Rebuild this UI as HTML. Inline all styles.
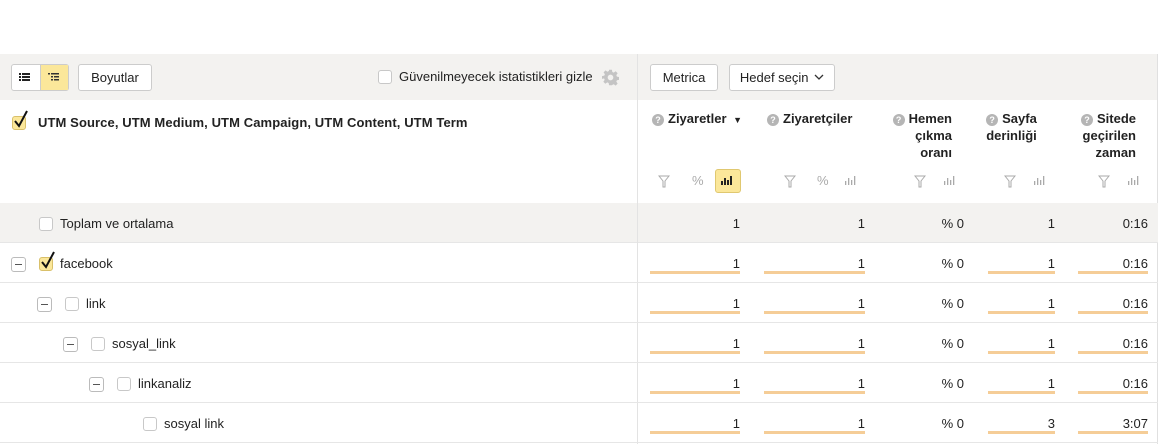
<!DOCTYPE html>
<html><head><meta charset="utf-8"><style>
*{box-sizing:border-box;margin:0;padding:0}
body{width:1161px;height:444px;overflow:hidden;background:#fff;font-family:"Liberation Sans",Arial,sans-serif;font-size:13px;color:#222;position:relative}
.a{position:absolute}
.btn{position:absolute;border:1px solid #ccc;border-radius:3px;background:#fff;height:27px;line-height:25px;text-align:center;font-size:13px}
.cb{position:absolute;width:14px;height:14px;border:1px solid #c8c8c8;border-radius:3px;background:#fff}
.cbc{background:#fbe79a;border-color:#d9c06a}
.tick{position:absolute;left:0px;top:-7px}
.mn{position:absolute;width:15px;height:15px;border:1px solid #bbb;border-radius:3px;background:#fff}
.mn:after{content:"";position:absolute;left:3px;top:6px;width:7px;height:1px;background:#555}
.row{position:absolute;left:0;width:1158px;height:40px;border-bottom:1px solid #e6e6e6}
.num{position:absolute;text-align:right;font-size:13px}
.bar{position:absolute;height:3px;background:#f5cd97}
.h{position:absolute;font-weight:bold;font-size:13px;line-height:17px;text-align:right}
.q{display:inline-block;width:12px;height:12px;border-radius:50%;background:#b5b5b5;color:#fff;font-size:9px;line-height:12px;text-align:center;vertical-align:0px;margin-right:4px;font-weight:bold}
.ic{position:absolute;color:#aaa;font-size:13px}
</style></head><body>
<div class="a" style="left:0;top:54px;width:1158px;height:46px;background:#f3f2f0"></div>
<div class="a" style="left:1157px;top:54px;width:1px;height:390px;background:#e0e0e0"></div>
<div class="a" style="left:637px;top:54px;width:1px;height:390px;background:#e3e3e3"></div>
<!-- toolbar -->
<div class="btn" style="left:11px;top:64px;width:58px"></div>
<div class="a" style="left:40px;top:65px;width:28px;height:25px;background:#fbe79a;border-left:1px solid #ccc"></div>
<svg class="a" style="left:19px;top:72px" width="12" height="10"><g fill="#222"><rect x="0" y="1" width="2" height="2"/><rect x="3" y="1" width="8" height="2"/><rect x="0" y="4" width="2" height="2"/><rect x="3" y="4" width="8" height="2"/><rect x="0" y="7" width="2" height="2"/><rect x="3" y="7" width="8" height="2"/></g></svg>
<svg class="a" style="left:48px;top:72px" width="12" height="10"><g fill="#333"><rect x="0" y="1" width="2" height="1.5"/><rect x="3" y="1" width="8" height="1.5"/><rect x="3" y="4" width="2" height="1.5"/><rect x="6" y="4" width="5" height="1.5"/><rect x="3" y="7" width="2" height="1.5"/><rect x="6" y="7" width="5" height="1.5"/></g></svg>
<div class="btn" style="left:78px;top:64px;width:74px">Boyutlar</div>
<div class="cb" style="left:378px;top:70px"></div>
<div class="a" style="left:399px;top:69px">Güvenilmeyecek istatistikleri gizle</div>
<svg class="a" style="left:602px;top:69px" width="17" height="17" viewBox="0 0 24 24"><path fill="#c4c4c4" d="M10 1h4l.6 3.2 2 .9 2.7-1.9 2.8 2.8-1.9 2.7.9 2 3.2.6v4l-3.2.6-.9 2 1.9 2.7-2.8 2.8-2.7-1.9-2 .9L14 23h-4l-.6-3.2-2-.9-2.7 1.9-2.8-2.8 1.9-2.7-.9-2L0 14v-4l3.2-.6.9-2L2.2 4.7 5 1.9l2.7 1.9 2-.9zM12 8a4 4 0 100 8 4 4 0 000-8z"/></svg>
<div class="btn" style="left:650px;top:64px;width:68px">Metrica</div>
<div class="btn" style="left:729px;top:64px;width:106px">Hedef seçin <svg width="10" height="7" style="vertical-align:1px;margin-left:2px"><path d="M1 1l4 4 4-4" stroke="#333" fill="none" stroke-width="1.3"/></svg></div>
<!-- header -->
<div class="cb cbc" style="left:12px;top:116px"><svg class="tick" width="16" height="19"><path d="M2 11l4 5L14 1" stroke="#111" stroke-width="2" fill="none"/></svg></div>
<div class="a" style="left:38px;top:115px;font-weight:bold;letter-spacing:0.1px">UTM Source, UTM Medium, UTM Campaign, UTM Content, UTM Term</div>
<div class="h" style="left:652px;top:110px;text-align:left"><span class="q">?</span>Ziyaretler <span style="font-size:9px;margin-left:3px">▼</span></div>
<div class="h" style="left:767px;top:110px;text-align:left"><span class="q">?</span>Ziyaretçiler</div>
<div class="h" style="left:880px;top:110px;width:72px"><span class="q">?</span>Hemen<br>çıkma<br>oranı</div>
<div class="h" style="left:978px;top:110px;width:67px;text-align:center"><span class="q">?</span>Sayfa<br>derinliği</div>
<div class="h" style="left:1068px;top:110px;width:68px"><span class="q">?</span>Sitede<br>geçirilen<br>zaman</div>
<!-- header icons -->
<svg class="a" style="left:658px;top:175px" width="12" height="13"><path d="M1 1h10L7 6v6L5 12V6z" fill="none" stroke="#aaa"/></svg>
<div class="ic" style="left:692px;top:173px">%</div>
<div class="a" style="left:715px;top:169px;width:26px;height:24px;background:#fbe79a;border:1px solid #e0c870;border-radius:3px"></div>
<svg class="a" style="left:721px;top:175px" width="14" height="11"><g fill="#222"><rect x="0" y="6" width="2" height="4"/><rect x="3" y="3" width="2" height="7"/><rect x="6" y="5" width="2" height="5"/><rect x="9" y="1" width="2" height="9"/></g></svg>
<svg class="a" style="left:784px;top:175px" width="12" height="13"><path d="M1 1h10L7 6v6L5 12V6z" fill="none" stroke="#aaa"/></svg>
<div class="ic" style="left:817px;top:173px">%</div>
<svg class="a" style="left:845px;top:175px" width="14" height="11"><g fill="#aaa"><rect x="0" y="6" width="1.3" height="4"/><rect x="3" y="3" width="1.3" height="7"/><rect x="6" y="5" width="1.3" height="5"/><rect x="9" y="1" width="1.3" height="9"/></g></svg>
<svg class="a" style="left:914px;top:175px" width="12" height="13"><path d="M1 1h10L7 6v6L5 12V6z" fill="none" stroke="#aaa"/></svg>
<svg class="a" style="left:944px;top:175px" width="14" height="11"><g fill="#aaa"><rect x="0" y="6" width="1.3" height="4"/><rect x="3" y="3" width="1.3" height="7"/><rect x="6" y="5" width="1.3" height="5"/><rect x="9" y="1" width="1.3" height="9"/></g></svg>
<svg class="a" style="left:1004px;top:175px" width="12" height="13"><path d="M1 1h10L7 6v6L5 12V6z" fill="none" stroke="#aaa"/></svg>
<svg class="a" style="left:1034px;top:175px" width="14" height="11"><g fill="#aaa"><rect x="0" y="6" width="1.3" height="4"/><rect x="3" y="3" width="1.3" height="7"/><rect x="6" y="5" width="1.3" height="5"/><rect x="9" y="1" width="1.3" height="9"/></g></svg>
<svg class="a" style="left:1098px;top:175px" width="12" height="13"><path d="M1 1h10L7 6v6L5 12V6z" fill="none" stroke="#aaa"/></svg>
<svg class="a" style="left:1128px;top:175px" width="14" height="11"><g fill="#aaa"><rect x="0" y="6" width="1.3" height="4"/><rect x="3" y="3" width="1.3" height="7"/><rect x="6" y="5" width="1.3" height="5"/><rect x="9" y="1" width="1.3" height="9"/></g></svg>
<!-- rows -->
<div class="row" style="top:203px;background:#f3f2f0"></div>
<div class="a" style="left:637px;top:203px;width:1px;height:241px;background:#e3e3e3"></div>
<div class="cb" style="left:39px;top:217px"></div><div class="a" style="left:60px;top:216px">Toplam ve ortalama</div>

<div class="row" style="top:243px"></div>
<div class="mn" style="left:11px;top:257px"></div><div class="cb cbc" style="left:39px;top:257px"><svg class="tick" width="16" height="19"><path d="M2 11l4 5L14 1" stroke="#111" stroke-width="2" fill="none"/></svg></div><div class="a" style="left:60px;top:256px">facebook</div>
<div class="row" style="top:283px"></div>
<div class="mn" style="left:37px;top:297px"></div><div class="cb" style="left:65px;top:297px"></div><div class="a" style="left:86px;top:296px">link</div>
<div class="row" style="top:323px"></div>
<div class="mn" style="left:63px;top:337px"></div><div class="cb" style="left:91px;top:337px"></div><div class="a" style="left:112px;top:336px">sosyal_link</div>
<div class="row" style="top:363px"></div>
<div class="mn" style="left:89px;top:377px"></div><div class="cb" style="left:117px;top:377px"></div><div class="a" style="left:138px;top:376px">linkanaliz</div>
<div class="row" style="top:403px"></div>
<div class="cb" style="left:143px;top:417px"></div><div class="a" style="left:164px;top:416px">sosyal link</div>

<div id="nums"></div>
<script>
var rows=[[203,'1','1','% 0','1','0:16',0],[243,'1','1','% 0','1','0:16',1],[283,'1','1','% 0','1','0:16',1],[323,'1','1','% 0','1','0:16',1],[363,'1','1','% 0','1','0:16',1],[403,'1','1','% 0','3','3:07',1]];
var cols=[[650,740],[764,865],[900,964],[988,1055],[1078,1148]];
var h='';
rows.forEach(function(r){
 cols.forEach(function(c,i){
  h+='<div class="num" style="left:'+c[0]+'px;width:'+(c[1]-c[0])+'px;top:'+(r[0]+13)+'px">'+r[i+1]+'</div>';
  if(r[6]&&i!=2)h+='<div class="bar" style="left:'+c[0]+'px;width:'+(c[1]-c[0])+'px;top:'+(r[0]+28)+'px"></div>';
 });
});
document.getElementById('nums').innerHTML=h;
</script>
</body></html>
